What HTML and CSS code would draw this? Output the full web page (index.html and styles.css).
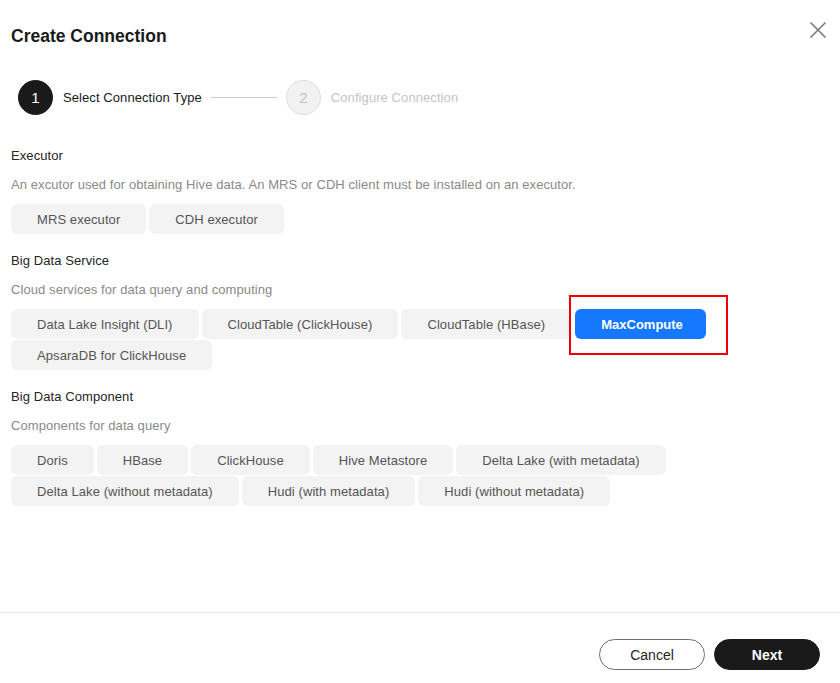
FILE: index.html
```html
<!DOCTYPE html>
<html lang="en">
<head>
<meta charset="utf-8">
<title>Create Connection</title>
<link rel="stylesheet" href="styles.css">
</head>
<body>
<div class="dialog">
  <div class="content">
    <div class="header">
      <h1 class="title">Create Connection</h1>
      <button class="close" aria-label="Close">
        <svg width="18" height="18" viewBox="0 0 18 18"><path d="M1.5 1.5 L16.5 16.5 M16.5 1.5 L1.5 16.5" stroke="#7a7a7a" stroke-width="1.6" fill="none"/></svg>
      </button>
    </div>

    <div class="steps">
      <div class="step active"><span class="step-num">1</span><span class="step-label">Select Connection Type</span></div>
      <span class="step-line"></span>
      <div class="step"><span class="step-num">2</span><span class="step-label">Configure Connection</span></div>
    </div>

    <div class="section">
      <div class="section-title">Executor</div>
      <div class="section-desc">An excutor used for obtaining Hive data. An MRS or CDH client must be installed on an executor.</div>
      <div class="options">
        <button class="opt">MRS executor</button>
        <button class="opt">CDH executor</button>
      </div>
    </div>

    <div class="section">
      <div class="section-title">Big Data Service</div>
      <div class="section-desc">Cloud services for data query and computing</div>
      <div class="options">
        <button class="opt">Data Lake Insight (DLI)</button>
        <button class="opt">CloudTable (ClickHouse)</button>
        <button class="opt">CloudTable (HBase)</button>
        <span class="highlight-wrap"><button class="opt selected">MaxCompute</button><span class="highlight-box"></span></span>
        <button class="opt">ApsaraDB for ClickHouse</button>
      </div>
    </div>

    <div class="section">
      <div class="section-title">Big Data Component</div>
      <div class="section-desc">Components for data query</div>
      <div class="options">
        <button class="opt">Doris</button>
        <button class="opt">HBase</button>
        <button class="opt">ClickHouse</button>
        <button class="opt">Hive Metastore</button>
        <button class="opt">Delta Lake (with metadata)</button>
        <button class="opt">Delta Lake (without metadata)</button>
        <button class="opt">Hudi (with metadata)</button>
        <button class="opt">Hudi (without metadata)</button>
      </div>
    </div>
  </div>

  <div class="footer">
    <button class="btn btn-cancel">Cancel</button>
    <button class="btn btn-next">Next</button>
  </div>
</div>
</body>
</html>
```

FILE: styles.css
```css
* { box-sizing: border-box; }
html, body { margin: 0; padding: 0; background: #fff; }
body {
  font-family: "Liberation Sans", Arial, sans-serif;
  color: #252525;
  font-size: 13px;
  letter-spacing: 0.08px;
}
.dialog {
  width: 840px;
  height: 683px;
  display: flex;
  flex-direction: column;
}
.content {
  flex: 1;
  padding: 0 11px;
}
.header {
  display: flex;
  justify-content: space-between;
  align-items: flex-start;
  padding-top: 24px;
}
.title {
  margin: 0;
  font-size: 17.5px;
  font-weight: bold;
  line-height: 24px;
  letter-spacing: 0;
  color: #1a1a1a;
}
.close {
  border: none;
  background: none;
  padding: 0;
  margin: -3px 2px 0 0;
  width: 18px;
  height: 18px;
  cursor: pointer;
}
.close svg { display: block; }

.steps {
  display: flex;
  align-items: center;
  margin-top: 32px;
  padding-left: 7px;
  height: 35px;
}
.step {
  display: flex;
  align-items: center;
}
.step-num {
  width: 35px;
  height: 35px;
  border-radius: 50%;
  display: flex;
  align-items: center;
  justify-content: center;
  font-size: 15px;
  background: #f2f2f2;
  border: 1px solid #dcdcdc;
  color: #c4c4c4;
}
.step-label {
  margin-left: 10px;
  font-size: 13px;
  color: #c4c4c4;
}
.step.active .step-num {
  background: #1a1a1a;
  border-color: #1a1a1a;
  color: #fff;
}
.step.active .step-label { color: #1a1a1a; }
.step-line {
  width: 66px;
  height: 1px;
  background: #cfcfcf;
  margin: 0 9px;
}

.section { margin-top: 31px; }
.section + .section { margin-top: 17px; }
.section-title {
  line-height: 20px;
  color: #252525;
}
.section-desc {
  line-height: 20px;
  margin-top: 9px;
  color: #8a8a8a;
}
.options {
  margin-top: 9px;
  display: flex;
  flex-wrap: wrap;
  gap: 1px 3px;
}
.opt {
  font-family: inherit;
  font-size: 13px;
  letter-spacing: 0.08px;
  height: 30px;
  padding: 0 26px;
  border: none;
  border-radius: 6px;
  background: #f3f3f3;
  color: #555;
  cursor: pointer;
}
.opt.selected {
  background: #1677ff;
  color: #fff;
  font-weight: bold;
  letter-spacing: 0;
  width: 131px;
}
.highlight-wrap {
  position: relative;
  display: inline-flex;
  margin-left: 1px;
}
.highlight-box {
  position: absolute;
  top: -14px;
  left: -6px;
  right: -22px;
  bottom: -16px;
  border: 2px solid #f00000;
  pointer-events: none;
}

.footer {
  border-top: 1px solid #e8e8e8;
  display: flex;
  justify-content: flex-end;
  gap: 9px;
  padding: 26px 20px 13px 0;
}
.btn {
  font-family: inherit;
  font-size: 14px;
  height: 31px;
  width: 106px;
  border-radius: 16px;
  cursor: pointer;
}
.btn-cancel {
  background: #fff;
  border: 1px solid #6f6f6f;
  color: #252525;
}
.btn-next {
  background: #1a1a1a;
  border: 1px solid #1a1a1a;
  color: #fff;
  font-weight: bold;
}
```
